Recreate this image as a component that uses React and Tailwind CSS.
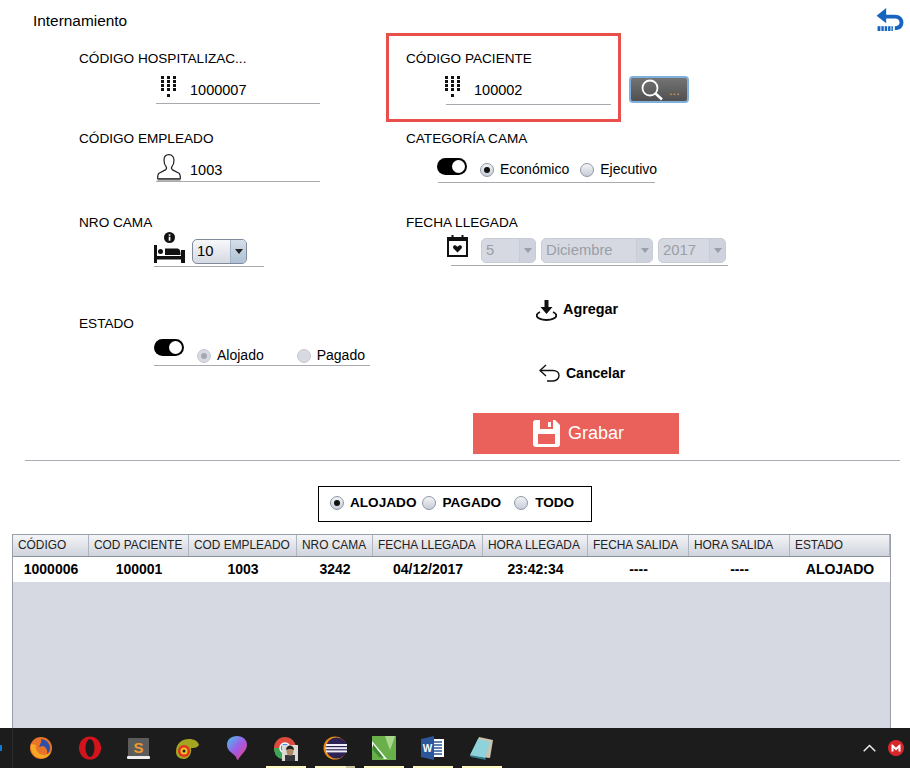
const font = { fontFamily: '"Liberation Sans", Arial, sans-serif' };

const columns = [
  { title: "CÓDIGO", value: "1000006" },
  { title: "COD PACIENTE", value: "100001" },
  { title: "COD EMPLEADO", value: "1003" },
  { title: "NRO CAMA", value: "3242" },
  { title: "FECHA LLEGADA", value: "04/12/2017" },
  { title: "HORA LLEGADA", value: "23:42:34" },
  { title: "FECHA SALIDA", value: "----" },
  { title: "HORA SALIDA", value: "----" },
  { title: "ESTADO", value: "ALOJADO" },
];

function Keypad() {
  const dots = [];
  [0, 4, 8, 12].forEach((y) => {
    [0, 6, 12].forEach((x) => dots.push([x, y]));
  });
  dots.push([6, 18]);
  return (
    <svg width="15" height="21" viewBox="0 0 15 21" className="mt-[10px] shrink-0">
      {dots.map(([x, y]) => (
        <rect key={x + "-" + y} x={x} y={y} width="3" height="3" fill="#111" />
      ))}
    </svg>
  );
}

function Person() {
  return (
    <svg width="24" height="27" viewBox="0 0 24 27" fill="none" stroke="#222" strokeWidth="1.2" className="shrink-0">
      <path d="M12 .7c-3.300 0-5 2.400-5 5.600 0 2.800 1 5 2.100 6.300.5 1 .4 2.600-.7 3.300L2 19.300c-1 .7-1.400 2.600-1.400 5.200h22.800c0-2.600-.4-4.500-1.400-5.200l-6.400-3.400c-1.100-.7-1.200-2.300-.7-3.300 1.100-1.300 2.100-3.500 2.100-6.300 0-3.200-1.700-5.600-5-5.600z" />
      <path d="M.5 25.500h23" strokeWidth="2" stroke="#666" />
    </svg>
  );
}

function Bed() {
  return (
    <svg width="31" height="31" viewBox="0 0 31 31" className="mb-px shrink-0">
      <circle cx="15.500" cy="5.500" r="5.500" fill="#111" />
      <rect x="14.700" y="4.700" width="1.700" height="4" fill="#fff" />
      <rect x="14.700" y="2.300" width="1.700" height="1.500" fill="#fff" />
      <rect x="0" y="13" width="3" height="18" fill="#111" />
      <rect x="27" y="18" width="4" height="13" fill="#111" />
      <rect x="0" y="24" width="31" height="3.500" fill="#111" />
      <circle cx="6.500" cy="19.500" r="2.500" fill="#111" />
      <path d="M11 23v-6.500h12c2.500 0 3.500 2 3.500 6.500z" fill="#111" />
    </svg>
  );
}

function Calendar() {
  return (
    <svg width="21" height="22" viewBox="0 0 21 22" className="shrink-0">
      <rect x="1" y="3" width="19" height="18" fill="none" stroke="#111" strokeWidth="2" />
      <rect x="1" y="3" width="19" height="3" fill="#111" />
      <rect x="4.500" y="0" width="2" height="4" fill="#111" />
      <rect x="14.500" y="0" width="2" height="4" fill="#111" />
      <path d="M10.500 17.500l-4-4c-1.600-2.100 1.300-4.200 3-2.600l1 .9 1-.9c1.700-1.600 4.600.5 3 2.600z" fill="#111" />
    </svg>
  );
}

function Toggle() {
  return (
    <span className="relative inline-block h-[17px] w-[30px] shrink-0 rounded-full bg-black">
      <span className="absolute right-[2px] top-[2px] h-[13px] w-[13px] rounded-full bg-white" />
    </span>
  );
}

function Radio({ checked, disabled }) {
  return (
    <span
      className={
        "flex h-[14px] w-[14px] shrink-0 items-center justify-center rounded-full border " +
        (disabled
          ? "border-[#c5c8d0] bg-[#d8dae2]"
          : "border-[#8e97a8] bg-gradient-to-b from-[#f3f4f7] to-[#c8ccd6]")
      }
    >
      {checked && (
        <span className={"h-[6px] w-[6px] rounded-full " + (disabled ? "bg-[#a5a8b0]" : "bg-[#111]")} />
      )}
    </span>
  );
}

function Combo({ value, width, disabled }) {
  return (
    <div
      style={{ width }}
      className={
        "flex h-[25px] shrink-0 overflow-hidden rounded-[5px] border text-[14.8px] " +
        (disabled
          ? "border-[#c8ccd5] bg-[#d6d9e1] text-[#9a9ea8]"
          : "border-[#7f8a9c] bg-gradient-to-b from-[#f7f8fa] to-[#d5d9e1] text-black")
      }
    >
      <span className="flex flex-1 items-center pl-[4px]">{value}</span>
      <span
        className={
          "flex w-[16px] items-center justify-center border-l " +
          (disabled ? "border-[#c8ccd5] bg-[#cdd2dc]" : "border-[#a4b4c6] bg-gradient-to-b from-[#d4dfe9] to-[#aec1d3]")
        }
      >
        <span
          className={
            "h-0 w-0 border-x-[4px] border-t-[5px] border-x-transparent " +
            (disabled ? "border-t-[#9a9ea8]" : "border-t-[#222]")
          }
        />
      </span>
    </div>
  );
}

function Label({ children }) {
  return <div className="h-4 text-[13.6px] leading-[18px] text-black whitespace-nowrap">{children}</div>;
}

function TaskIcon({ children }) {
  return <div className="flex w-[49px] shrink-0 items-center justify-center">{children}</div>;
}

function Taskbar() {
  return (
    <div className="relative flex h-[40px] shrink-0 items-center bg-[#1c1c1c] pl-[16px] pr-[6px]">
      <span className="absolute left-0 top-[17px] h-[6px] w-[2px] bg-[#0a78d4]" />
      <span className="absolute left-[12px] top-0 h-full w-px bg-[#2c2c2c]" />
      <TaskIcon>
        <svg width="24" height="24" viewBox="0 0 24 24">
          <circle cx="12" cy="12" r="11" fill="#e8742a" />
          <path d="M12 3a9 9 0 0 1 9 9c0 3-1.500 5-3 6 1-3-.5-7-4-8-2 0-2 1-4 1 1-3 3-5 2-8z" fill="#2f4fa8" />
          <path d="M2 8c-1 5 1 12 8 14 5 1 10-1 12-6-3 3-7 4-11 2-3-2-5-5-4-9z" fill="#f6a821" />
        </svg>
      </TaskIcon>
      <TaskIcon>
        <svg width="22" height="24" viewBox="0 0 22 24">
          <ellipse cx="11" cy="12" rx="11" ry="11.500" fill="#d3141c" />
          <ellipse cx="11" cy="12" rx="4.500" ry="9" fill="#1c1c1c" />
        </svg>
      </TaskIcon>
      <TaskIcon>
        <svg width="23" height="21" viewBox="0 0 23 21">
          <rect x="1" y="0" width="21" height="20" rx="1" fill="#5c5c5c" />
          <rect x="0" y="18" width="23" height="3" rx="1" fill="#eee" />
          <text x="11.500" y="15" textAnchor="middle" fontSize="15" fontWeight="bold" fill="#f09a30" fontFamily="Liberation Sans">S</text>
        </svg>
      </TaskIcon>
      <TaskIcon>
        <svg width="23" height="21" viewBox="0 0 23 21">
          <path d="M0 14C0 5 6 1 13 1c5 0 9 2 10 6-2 3-5 3-8 3 1 5-2 11-7 11-5 0-8-3-8-7z" fill="#a2a621" />
          <circle cx="8" cy="13" r="6" fill="#e2311d" />
          <circle cx="8" cy="13" r="3.500" fill="#f0c22a" />
          <circle cx="8" cy="13" r="1.500" fill="#222" />
        </svg>
      </TaskIcon>
      <TaskIcon>
        <svg width="20" height="24" viewBox="0 0 20 24">
          <defs>
            <linearGradient id="drop" x1="0" y1="0" x2="1" y2="1">
              <stop offset="0" stopColor="#3fc6e8" />
              <stop offset="0.5" stopColor="#a05ce8" />
              <stop offset="1" stopColor="#f03c78" />
            </linearGradient>
          </defs>
          <path d="M10 0c6 0 10 3.500 10 9 0 6-6 9-9 15-1 0-1.500-2-2-3C6 17 0 15 0 9 0 3.500 4 0 10 0z" fill="url(#drop)" />
        </svg>
      </TaskIcon>
      <TaskIcon>
        <svg width="25" height="25" viewBox="0 0 25 25">
          <circle cx="12" cy="12" r="11" fill="#dd4b3e" />
          <path d="M12 12L2 18a11 11 0 0 0 11 5z" fill="#3aa757" />
          <path d="M1 12a11 11 0 0 0 6 10l5-10z" fill="#3aa757" />
          <path d="M12 12l10-3a11 11 0 0 1-9 14z" fill="#f4c20d" />
          <circle cx="12" cy="12" r="5" fill="#4a8af4" stroke="#fff" strokeWidth="1.500" />
          <rect x="9" y="9" width="16" height="16" fill="#dcdad2" />
          <rect x="12" y="19" width="10" height="6" fill="#33363a" />
          <ellipse cx="17" cy="15" rx="3.500" ry="4.500" fill="#b08a68" />
          <path d="M13 14c0-3 2-4.500 4-4.500s4 1.500 4 4.500c-2-1.500-6-1.500-8 0z" fill="#26221e" />
        </svg>
      </TaskIcon>
      <TaskIcon>
        <svg width="24" height="24" viewBox="0 0 24 24">
          <circle cx="12" cy="12" r="11.500" fill="#e98a15" />
          <circle cx="13.500" cy="12" r="10.500" fill="#2c2255" />
          <rect x="3" y="8" width="21" height="2" fill="#f0eef8" />
          <rect x="2.500" y="11.200" width="21.500" height="2" fill="#f0eef8" />
          <rect x="3" y="14.400" width="21" height="2" fill="#f0eef8" />
        </svg>
      </TaskIcon>
      <TaskIcon>
        <svg width="24" height="24" viewBox="0 0 24 24">
          <rect width="24" height="24" fill="#6ab04a" />
          <path d="M13 0h10l-3 9-2 5-2-5z" fill="#a8d68c" />
          <path d="M0 5l15 18h-3L0 10z" fill="#fff" />
          <path d="M1 8l11 14-5-1-6-7z" fill="#3f8a34" />
        </svg>
      </TaskIcon>
      <TaskIcon>
        <svg width="23" height="24" viewBox="0 0 23 24">
          <rect x="11" y="3" width="12" height="18" fill="#fff" />
          <path d="M13 6h8M13 9h8M13 12h8M13 15h8M13 18h8" stroke="#2b579a" strokeWidth="1.500" />
          <path d="M0 3l13-3v24L0 21z" fill="#2b579a" />
          <text x="6.500" y="16" textAnchor="middle" fontSize="10" fontWeight="bold" fill="#fff" fontFamily="Liberation Sans">W</text>
        </svg>
      </TaskIcon>
      <TaskIcon>
        <svg width="23" height="23" viewBox="0 0 23 23">
          <path d="M9 0l14 3-3 18L0 19z" fill="#c9c4b0" />
          <path d="M8 2l12 3-5 16L0 18z" fill="#8fd2dc" />
          <path d="M0 18l15 3 1 2L1 20z" fill="#2f7f90" />
        </svg>
      </TaskIcon>
      <div className="ml-auto flex items-center gap-[12px]">
        <svg width="13" height="8" viewBox="0 0 13 8" fill="none" stroke="#f2f2f2" strokeWidth="1.400">
          <path d="M.7 7.300L6.500 1.500l5.800 5.800" />
        </svg>
        <svg width="16" height="16" viewBox="0 0 16 16">
          <circle cx="8" cy="8" r="8" fill="#d9272e" />
          <path d="M3.500 11.500v-7h1.200L8 7.800l3.300-3.300h1.200v7h-2V8L8 10.500 5.500 8v3.500z" fill="#fff" />
        </svg>
      </div>
      <span className="absolute bottom-0 left-[266px] h-[2px] w-[40px] bg-[#fcf8c4]" />
      <span className="absolute bottom-0 left-[315px] h-[2px] w-[31px] bg-[#fcf8c4]" />
      <span className="absolute bottom-0 left-[346px] h-[2px] w-[9px] bg-[#c8c59c]" />
      <span className="absolute bottom-0 left-[364px] h-[2px] w-[40px] bg-[#fcf8c4]" />
      <span className="absolute bottom-0 left-[413px] h-[2px] w-[40px] bg-[#fcf8c4]" />
      <span className="absolute bottom-0 left-[462px] h-[2px] w-[40px] bg-[#fcf8c4]" />
    </div>
  );
}

export default function App() {
  return (
    <div style={font} className="flex h-[768px] w-[910px] flex-col overflow-hidden bg-white text-black">
      <div className="flex h-[33px] shrink-0 items-start justify-between pl-[33px] pr-[6px] pt-[12px]">
        <span className="text-[15.4px] leading-[18px]">Internamiento</span>
        <svg width="28" height="23" viewBox="0 0 28 24" className="-mt-[4px]">
          <path d="M10 0L0 8l10 8v-5h9c3 0 5 1.500 5 4s-2 4-5 4v4c6 0 9-3.500 9-8s-3.500-8-9-8h-9z" fill="#1565c0" />
          <path d="M1 19h16v5H1z" fill="#1565c0" />
          <path d="M4.500 19v5M8 19v5M11.500 19v5M15 19v5" stroke="#fff" strokeWidth="1" />
        </svg>
      </div>

      <div className="flex h-[427px] shrink-0">
        <div className="ml-[79px] w-[307px] shrink-0 pt-[17px]">
          <Label>CÓDIGO HOSPITALIZAC...</Label>
          <div className="ml-[77px] flex h-[38px] w-[164px] items-start border-b border-[#a9a9b0] pl-[5px] text-[14.5px]">
            <Keypad />
            <span className="ml-[14px] mt-[14px] leading-5">1000007</span>
          </div>

          <div className="mt-[26px]">
            <Label>CÓDIGO EMPLEADO</Label>
          </div>
          <div className="ml-[77px] flex h-[36px] w-[164px] items-end border-b border-[#a9a9b0] text-[14.5px]">
            <span className="ml-px flex">
              <Person />
            </span>
            <span className="mb-px ml-[9px] leading-5">1003</span>
          </div>

          <div className="mt-[32px]">
            <Label>NRO CAMA</Label>
          </div>
          <div className="ml-[75px] flex h-[37px] w-[110px] items-end gap-[7px] border-b border-[#a9a9b0] pb-[2px]">
            <Bed />
            <Combo value="10" width={55} />
          </div>

          <div className="mt-[48px]">
            <Label>ESTADO</Label>
          </div>
          <div className="ml-[75px] flex h-[35px] w-[216px] items-center border-b border-[#a9a9b0] text-[14px]">
            <span className="-mt-px flex">
              <Toggle />
            </span>
            <span className="ml-[13px] mt-[15px] flex items-center gap-[6px]">
              <Radio checked disabled />
              Alojado
            </span>
            <span className="ml-[33px] mt-[15px] flex items-center gap-[6px]">
              <Radio disabled />
              Pagado
            </span>
          </div>
        </div>

        <div className="flex-1">
          <div className="flex">
            <div className="h-[89px] w-[235px] shrink-0 border-[3px] border-[#e9504b] pl-[17px] pt-[14px]">
              <Label>CÓDIGO PACIENTE</Label>
              <div className="ml-[40px] flex h-[39px] w-[165px] items-start border-b border-[#a9a9b0] text-[14.5px]">
                <span className="-ml-px flex">
                  <Keypad />
                </span>
                <span className="ml-[14px] mt-[14px] leading-5">100002</span>
              </div>
            </div>
            <div className="ml-[8px] mt-[43px] flex h-[27px] w-[60px] items-center rounded-[4px] border-2 border-[#7fb0dc] bg-gradient-to-b from-[#747474] to-[#505050] pl-[10px]">
              <svg width="22" height="22" viewBox="0 0 22 22" fill="none" stroke="#fff" className="shrink-0">
                <circle cx="9" cy="9" r="7.500" strokeWidth="1.800" />
                <path d="M14.500 14.500L21 20.500" strokeWidth="2.400" />
              </svg>
              <span className="ml-[6px] mt-[2px] text-[13px] leading-none text-[#e8a040]">...</span>
            </div>
          </div>

          <div className="ml-[20px] mt-[8px]">
            <Label>CATEGORÍA CAMA</Label>
            <div className="ml-[32px] flex h-[37px] w-[217px] items-center border-b border-[#a9a9b0] text-[14px]">
              <span className="-ml-px mt-[4px] flex">
                <Toggle />
              </span>
              <span className="ml-[13px] mt-[11px] flex items-center gap-[6px]">
                <Radio checked />
                Económico
              </span>
              <span className="ml-[11px] mt-[11px] flex items-center gap-[6px]">
                <Radio />
                Ejecutivo
              </span>
            </div>

            <div className="mt-[31px]">
              <Label>FECHA LLEGADA</Label>
            </div>
            <div className="ml-[45px] flex h-[36px] w-[277px] items-end border-b border-[#a9a9b0] pb-[2px]">
              <span className="-ml-[4px] mb-[6px] flex">
                <Calendar />
              </span>
              <span className="ml-[13px] flex gap-[5px]">
                <Combo value="5" width={55} disabled />
                <Combo value="Diciembre" width={112} disabled />
                <Combo value="2017" width={68} disabled />
              </span>
            </div>

            <div className="ml-[130px] mt-[32px] flex h-[24px] items-center gap-[6px] text-[14.4px] font-bold">
              <svg width="21" height="21" viewBox="0 0 21 21" className="shrink-0">
                <path d="M8.500 0h4v7h4l-6 7-6-7h4z" fill="#111" />
                <path d="M4 12C1.500 13 .7 14 .7 15.500c0 2.500 4.300 4.500 9.800 4.500s9.800-2 9.800-4.500c0-1.500-.8-2.500-3.300-3.500" fill="none" stroke="#111" strokeWidth="1.800" />
              </svg>
              Agregar
            </div>

            <div className="ml-[133px] mt-[39px] flex h-[24px] items-center gap-[6px] text-[14px] font-bold">
              <svg width="21" height="18" viewBox="0 0 21 18" fill="none" stroke="#111" strokeWidth="1.400" className="shrink-0">
                <path d="M7 1L1 6.500 7 12" />
                <path d="M1 6.500h13c3.500 0 6 2 6 5s-2.500 5.500-6 5.500H8" />
              </svg>
              Cancelar
            </div>

            <div className="ml-[67px] mt-[28px] flex h-[41px] w-[206px] items-center justify-center gap-[8px] bg-[#ea605b] pl-[5px] text-[18px] text-white">
              <svg width="27" height="27" viewBox="0 0 27 27" className="shrink-0">
                <path d="M3 0h19l5 5v19a3 3 0 0 1-3 3H3a3 3 0 0 1-3-3V3a3 3 0 0 1 3-3z" fill="#fff" />
                <rect x="7" y="0" width="13" height="9" fill="#ea605b" />
                <rect x="15" y="2" width="3" height="5" fill="#fff" />
                <rect x="5" y="14" width="17" height="10" fill="#ea605b" />
              </svg>
              Grabar
            </div>
          </div>
        </div>
      </div>

      <div className="ml-[25px] h-px w-[875px] shrink-0 bg-[#a9adb4]" />

      <div className="ml-[318px] mt-[25px] flex h-[36px] w-[274px] shrink-0 items-center border border-black pb-[2px] pl-[11px] text-[13.6px] font-bold">
        <Radio checked />
        <span className="ml-[6px]">ALOJADO</span>
        <span className="ml-[6px]"><Radio /></span>
        <span className="ml-[6px]">PAGADO</span>
        <span className="ml-[13px]"><Radio /></span>
        <span className="ml-[7px]">TODO</span>
      </div>

      <div className="ml-[12px] mt-[12px] flex min-h-0 w-[879px] flex-1 flex-col border-x border-t border-[#9a9ea8] bg-[#d6d9e1]">
        <div className="grid h-[22px] shrink-0 grid-cols-[76px_100px_108px_76px_110px_105px_101px_101px_100px] border-b border-[#8e929c] bg-gradient-to-b from-[#f4f5f8] to-[#cfd3dc]">
          {columns.map((c) => (
            <div key={c.title} className="flex items-center whitespace-nowrap border-r border-[#b0b4be] pl-[5px] pt-px text-[11.9px] text-[#222]">
              {c.title}
            </div>
          ))}
        </div>
        <div className="grid h-[25px] shrink-0 grid-cols-[76px_100px_108px_76px_110px_105px_101px_101px_100px] bg-white">
          {columns.map((c) => (
            <div key={c.title} className="flex items-center justify-center text-[14px] font-bold">
              {c.value}
            </div>
          ))}
        </div>
      </div>

      <Taskbar />
    </div>
  );
}
